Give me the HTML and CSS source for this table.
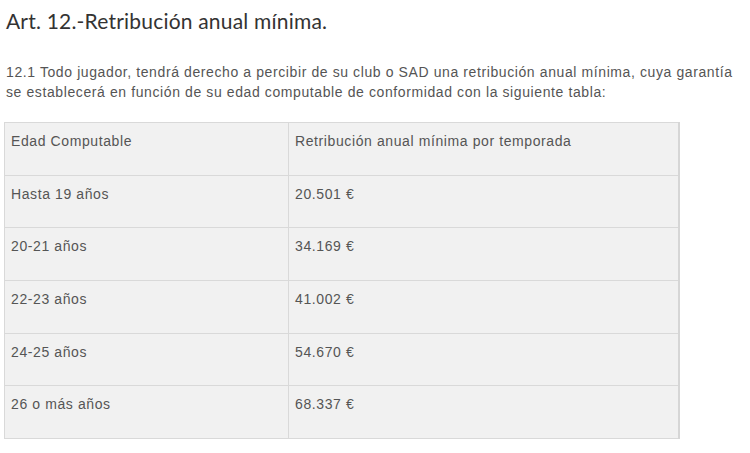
FILE: index.html
```html
<!DOCTYPE html>
<html lang="es">
<head>
<meta charset="utf-8">
<link rel="stylesheet" href="styles.css">
</head>
<body>
<main class="article">
  <h2 class="title">Art. 12.-Retribución anual mínima.</h2>
  <p class="text">12.1 Todo jugador, tendrá derecho a percibir de su club o SAD una retribución anual mínima, cuya garantía se establecerá en función de su edad computable de conformidad con la siguiente tabla:</p>
  <table class="tabla">
    <tr><td class="c1">Edad Computable</td><td>Retribución anual mínima por temporada</td></tr>
    <tr><td class="c1">Hasta 19 años</td><td>20.501 €</td></tr>
    <tr><td class="c1">20-21 años</td><td>34.169 €</td></tr>
    <tr><td class="c1">22-23 años</td><td>41.002 €</td></tr>
    <tr><td class="c1">24-25 años</td><td>54.670 €</td></tr>
    <tr><td class="c1">26 o más años</td><td>68.337 €</td></tr>
  </table>
</main>
</body>
</html>
```
FILE: styles.css
```css
html, body { margin: 0; padding: 0; background: #fff; }
.article { padding: 9px 0 0 5px; width: 740px; }
.title {
  margin: 0 0 0 1px;
  font-family: "Lato", "DejaVu Sans", sans-serif;
  font-weight: 400;
  font-size: 21px;
  line-height: 24px;
  color: #333;
  letter-spacing: 0.2px;
}
.text {
  margin: 29px 0 0 1px;
  font-family: "Liberation Sans", Arial, sans-serif;
  font-size: 14px;
  line-height: 20px;
  color: #555;
  letter-spacing: 0.6px;
}
.tabla {
  margin: 20px 0 0 -1px;
  width: 676px;
  border-collapse: collapse;
  background: #f1f1f1;
  font-family: "Liberation Sans", Arial, sans-serif;
  font-size: 14px;
  color: #555;
  letter-spacing: 0.6px;
  border-right: 2px solid #d6d6d6;
}
.tabla td {
  border: 1px solid #d9d9d9;
  height: 52.7px;
  box-sizing: border-box;
  padding: 10px 6px 0 6px;
  vertical-align: top;
  line-height: 16px;
}
.tabla .c1 { width: 284px; }
```
